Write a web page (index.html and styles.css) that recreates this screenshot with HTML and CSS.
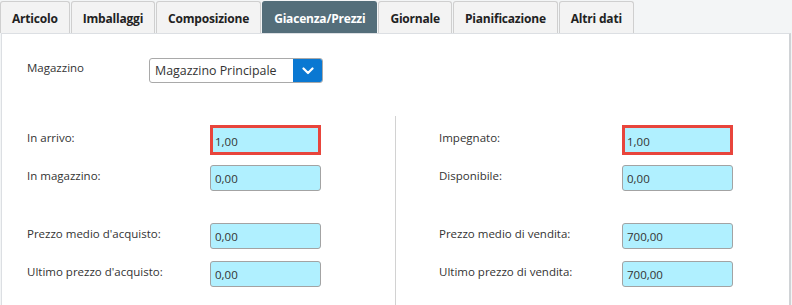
FILE: index.html
```html
<!DOCTYPE html>
<html lang="it">
<head>
<meta charset="utf-8">
<title>Giacenza/Prezzi</title>
<link rel="stylesheet" href="styles.css">
</head>
<body>
<div class="tabs">
  <div class="tab">Articolo</div>
  <div class="tab">Imballaggi</div>
  <div class="tab">Composizione</div>
  <div class="tab active">Giacenza/Prezzi</div>
  <div class="tab">Giornale</div>
  <div class="tab">Pianificazione</div>
  <div class="tab">Altri dati</div>
</div>
<div class="panel">
  <div class="mag-row">
    <div class="mag-label">Magazzino</div>
    <div class="select">
      <div class="select-text">Magazzino Principale</div>
      <div class="select-btn">
        <svg width="12" height="8" viewBox="0 0 12 8"><path d="M1.5 1.5 L6 6 L10.5 1.5" fill="none" stroke="#fff" stroke-width="2.2" stroke-linecap="round" stroke-linejoin="round"/></svg>
      </div>
    </div>
  </div>
  <div class="fields">
    <div class="col left">
      <div class="row"><div class="label">In arrivo:</div><div class="input error">1,00</div></div>
      <div class="row"><div class="label">In magazzino:</div><div class="input">0,00</div></div>
      <div class="spacer"></div>
      <div class="row"><div class="label">Prezzo medio d'acquisto:</div><div class="input">0,00</div></div>
      <div class="row"><div class="label">Ultimo prezzo d'acquisto:</div><div class="input">0,00</div></div>
    </div>
    <div class="col right">
      <div class="row"><div class="label">Impegnato:</div><div class="input error">1,00</div></div>
      <div class="row"><div class="label">Disponibile:</div><div class="input">0,00</div></div>
      <div class="spacer"></div>
      <div class="row"><div class="label">Prezzo medio di vendita:</div><div class="input">700,00</div></div>
      <div class="row"><div class="label">Ultimo prezzo di vendita:</div><div class="input">700,00</div></div>
    </div>
  </div>
</div>
</body>
</html>
```
FILE: styles.css
```css
html, body {
  margin: 0;
  padding: 0;
}
body {
  background: #f3f5f6;
  font-family: "Open Sans", "Noto Sans", sans-serif;
  color: #333;
  width: 792px;
  height: 305px;
  overflow: hidden;
}
.tabs {
  display: flex;
  gap: 1px;
  height: 33px;
  padding-top: 1px;
  box-sizing: border-box;
}
.tab {
  box-sizing: border-box;
  height: 32px;
  padding: 1px 11px 0;
  display: flex;
  align-items: center;
  font-size: 12px;
  font-weight: 700;
  color: #222;
  background: #f3f3f3;
  border: 1px solid #cfcfcf;
  border-bottom: none;
  border-radius: 3px 3px 0 0;
  letter-spacing: -0.2px;
}
.tab.active {
  background: #546e7a;
  border-color: #546e7a;
  color: #fff;
}
.panel {
  margin-left: 1px;
  width: 790px;
  height: 280px;
  box-sizing: border-box;
  background: #fff;
  border: 1px solid #dcdfe3;
  border-right: 2px solid #d0d3d6;
  padding: 24px 0 0 25px;
}
.mag-row {
  display: flex;
  align-items: center;
  height: 25px;
}
.mag-label {
  width: 122px;
  font-size: 11.5px;
  padding-bottom: 6px;
}
.select {
  display: flex;
  width: 174px;
  height: 25px;
  box-sizing: border-box;
  border: 1px solid #a9a9a9;
  border-radius: 3px;
  overflow: hidden;
}
.select-text {
  flex: 1;
  font-size: 12.4px;
  padding-left: 5px;
  display: flex;
  align-items: center;
  color: #333;
}
.select-btn {
  width: 29px;
  background: #0a78d2;
  display: flex;
  align-items: center;
  justify-content: center;
}
.fields {
  display: grid;
  grid-template-columns: 368px 1fr;
  margin-top: 33px;
}
.col {
  padding-top: 5px;
  height: 190px;
}
.col.right {
  border-left: 1px solid #d2d2d2;
  padding-left: 43px;
}
.row {
  display: flex;
  align-items: center;
  height: 38px;
}
.label {
  width: 183px;
  font-size: 11.5px;
  padding-bottom: 6px;
  white-space: nowrap;
}
.spacer {
  height: 20px;
}
.input {
  box-sizing: border-box;
  width: 111px;
  height: 26px;
  background: #b0f0ff;
  border: 1px solid #a3a3a3;
  border-radius: 3px;
  font-size: 11.5px;
  display: flex;
  align-items: center;
  padding-left: 4px;
  color: #333;
}
.input.error {
  height: 30px;
  border: 3px solid #e8453c;
  border-radius: 0;
  padding-left: 2px;
  padding-top: 2px;
}
```
